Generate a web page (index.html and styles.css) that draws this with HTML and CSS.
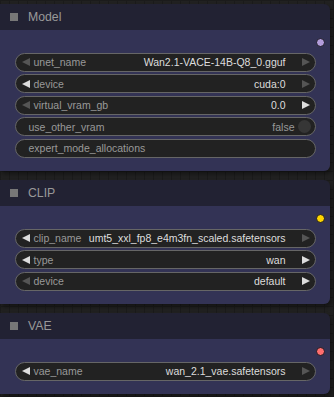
FILE: index.html
```html
<!DOCTYPE html>
<html lang="en">
<head>
  <meta charset="UTF-8" />
  <meta name="viewport" content="width=device-width, initial-scale=1.0" />
  <title>Nodes</title>
  <link rel="stylesheet" href="styles.css">
</head>
<body>
  <div class="canvas">

    <div class="node">
      <div class="node-title"><span class="box"></span>Model</div>
      <div class="node-body">
        <div class="outputs"><span class="slot model"></span></div>
        <div class="widgets">
          <div class="widget">
            <span class="arrow left dim"></span>
            <span class="label">unet_name</span>
            <span class="value">Wan2.1-VACE-14B-Q8_0.gguf</span>
            <span class="arrow right dim"></span>
          </div>
          <div class="widget">
            <span class="arrow left"></span>
            <span class="label">device</span>
            <span class="value">cuda:0</span>
            <span class="arrow right dim"></span>
          </div>
          <div class="widget">
            <span class="arrow left dim"></span>
            <span class="label">virtual_vram_gb</span>
            <span class="value">0.0</span>
            <span class="arrow right"></span>
          </div>
          <div class="widget plain">
            <span class="label">use_other_vram</span>
            <span class="value muted">false</span>
            <span class="toggle"></span>
          </div>
          <div class="widget plain">
            <span class="label">expert_mode_allocations</span>
          </div>
        </div>
      </div>
    </div>

    <div class="node">
      <div class="node-title"><span class="box"></span>CLIP</div>
      <div class="node-body">
        <div class="outputs"><span class="slot clip"></span></div>
        <div class="widgets">
          <div class="widget">
            <span class="arrow left"></span>
            <span class="label">clip_name</span>
            <span class="value">umt5_xxl_fp8_e4m3fn_scaled.safetensors</span>
            <span class="arrow right dim"></span>
          </div>
          <div class="widget">
            <span class="arrow left"></span>
            <span class="label">type</span>
            <span class="value">wan</span>
            <span class="arrow right"></span>
          </div>
          <div class="widget">
            <span class="arrow left dim"></span>
            <span class="label">device</span>
            <span class="value">default</span>
            <span class="arrow right"></span>
          </div>
        </div>
      </div>
    </div>

    <div class="node">
      <div class="node-title"><span class="box"></span>VAE</div>
      <div class="node-body">
        <div class="outputs"><span class="slot vae"></span></div>
        <div class="widgets">
          <div class="widget">
            <span class="arrow left"></span>
            <span class="label">vae_name</span>
            <span class="value">wan_2.1_vae.safetensors</span>
            <span class="arrow right dim"></span>
          </div>
        </div>
      </div>
    </div>

  </div>
</body>
</html>
```

FILE: styles.css
```css
body {
  margin: 0;
  padding: 0;
  background-color: #202020;
  font-family: "Liberation Sans", Arial, sans-serif;
}
.canvas {
  width: 334px;
  height: 397px;
  overflow: hidden;
  padding-top: 4px;
  box-sizing: border-box;
  display: flex;
  flex-direction: column;
  gap: 9.5px;
  background-color: #212121;
  background-image:
    linear-gradient(90deg, #1b1b1b 1px, transparent 1px),
    linear-gradient(#1b1b1b 1px, transparent 1px);
  background-size: 9px 9px;
}
.node {
  width: 330px;
  border-radius: 0 6px 6px 0;
  overflow: hidden;
  flex-shrink: 0;
  box-shadow: 2px 3px 4px rgba(0, 0, 0, 0.4);
}
.node-title {
  height: 25.5px;
  background: #222233;
  color: #999;
  font-size: 12.25px;
  display: flex;
  align-items: center;
  padding-left: 10px;
}
.box {
  width: 8px;
  height: 8px;
  background: #777;
  margin-right: 10px;
}
.node-body {
  background: #333355;
  padding-bottom: 13px;
}
.outputs {
  height: 23px;
  display: flex;
  justify-content: flex-end;
  align-items: center;
  padding-right: 5px;
  box-sizing: border-box;
}
.slot {
  width: 7px;
  height: 7px;
  border-radius: 50%;
  border: 1px solid #1a1a24;
  margin-top: 2px;
}
.slot.model { background: #b39ddb; }
.slot.clip { background: #ffd500; }
.slot.vae { background: #ff6e6e; }
.widgets {
  display: flex;
  flex-direction: column;
  gap: 2.5px;
  padding: 0 14.5px;
}
.widget {
  height: 19px;
  box-sizing: border-box;
  border: 1px solid #666;
  border-radius: 10px;
  background: #222;
  display: flex;
  align-items: center;
  font-size: 10.5px;
  padding: 0 5px 0 6px;
}
.widget.plain {
  padding-left: 13px;
  padding-right: 4px;
}
.label {
  color: #999;
  white-space: nowrap;
}
.value {
  color: #ddd;
  margin-left: auto;
  white-space: nowrap;
  padding-left: 4px;
}
.value.muted {
  color: #999;
}
.arrow {
  width: 0;
  height: 0;
  border-top: 4px solid transparent;
  border-bottom: 4px solid transparent;
}
.arrow.left {
  border-right: 8px solid #ddd;
  margin-right: 4px;
}
.arrow.right {
  border-left: 8px solid #ddd;
  margin-left: 16px;
}
.arrow.left.dim { border-right-color: #555; }
.arrow.right.dim { border-left-color: #555; }
.toggle {
  width: 13px;
  height: 13px;
  border-radius: 50%;
  background: #363636;
  margin-left: 3px;
}
```
